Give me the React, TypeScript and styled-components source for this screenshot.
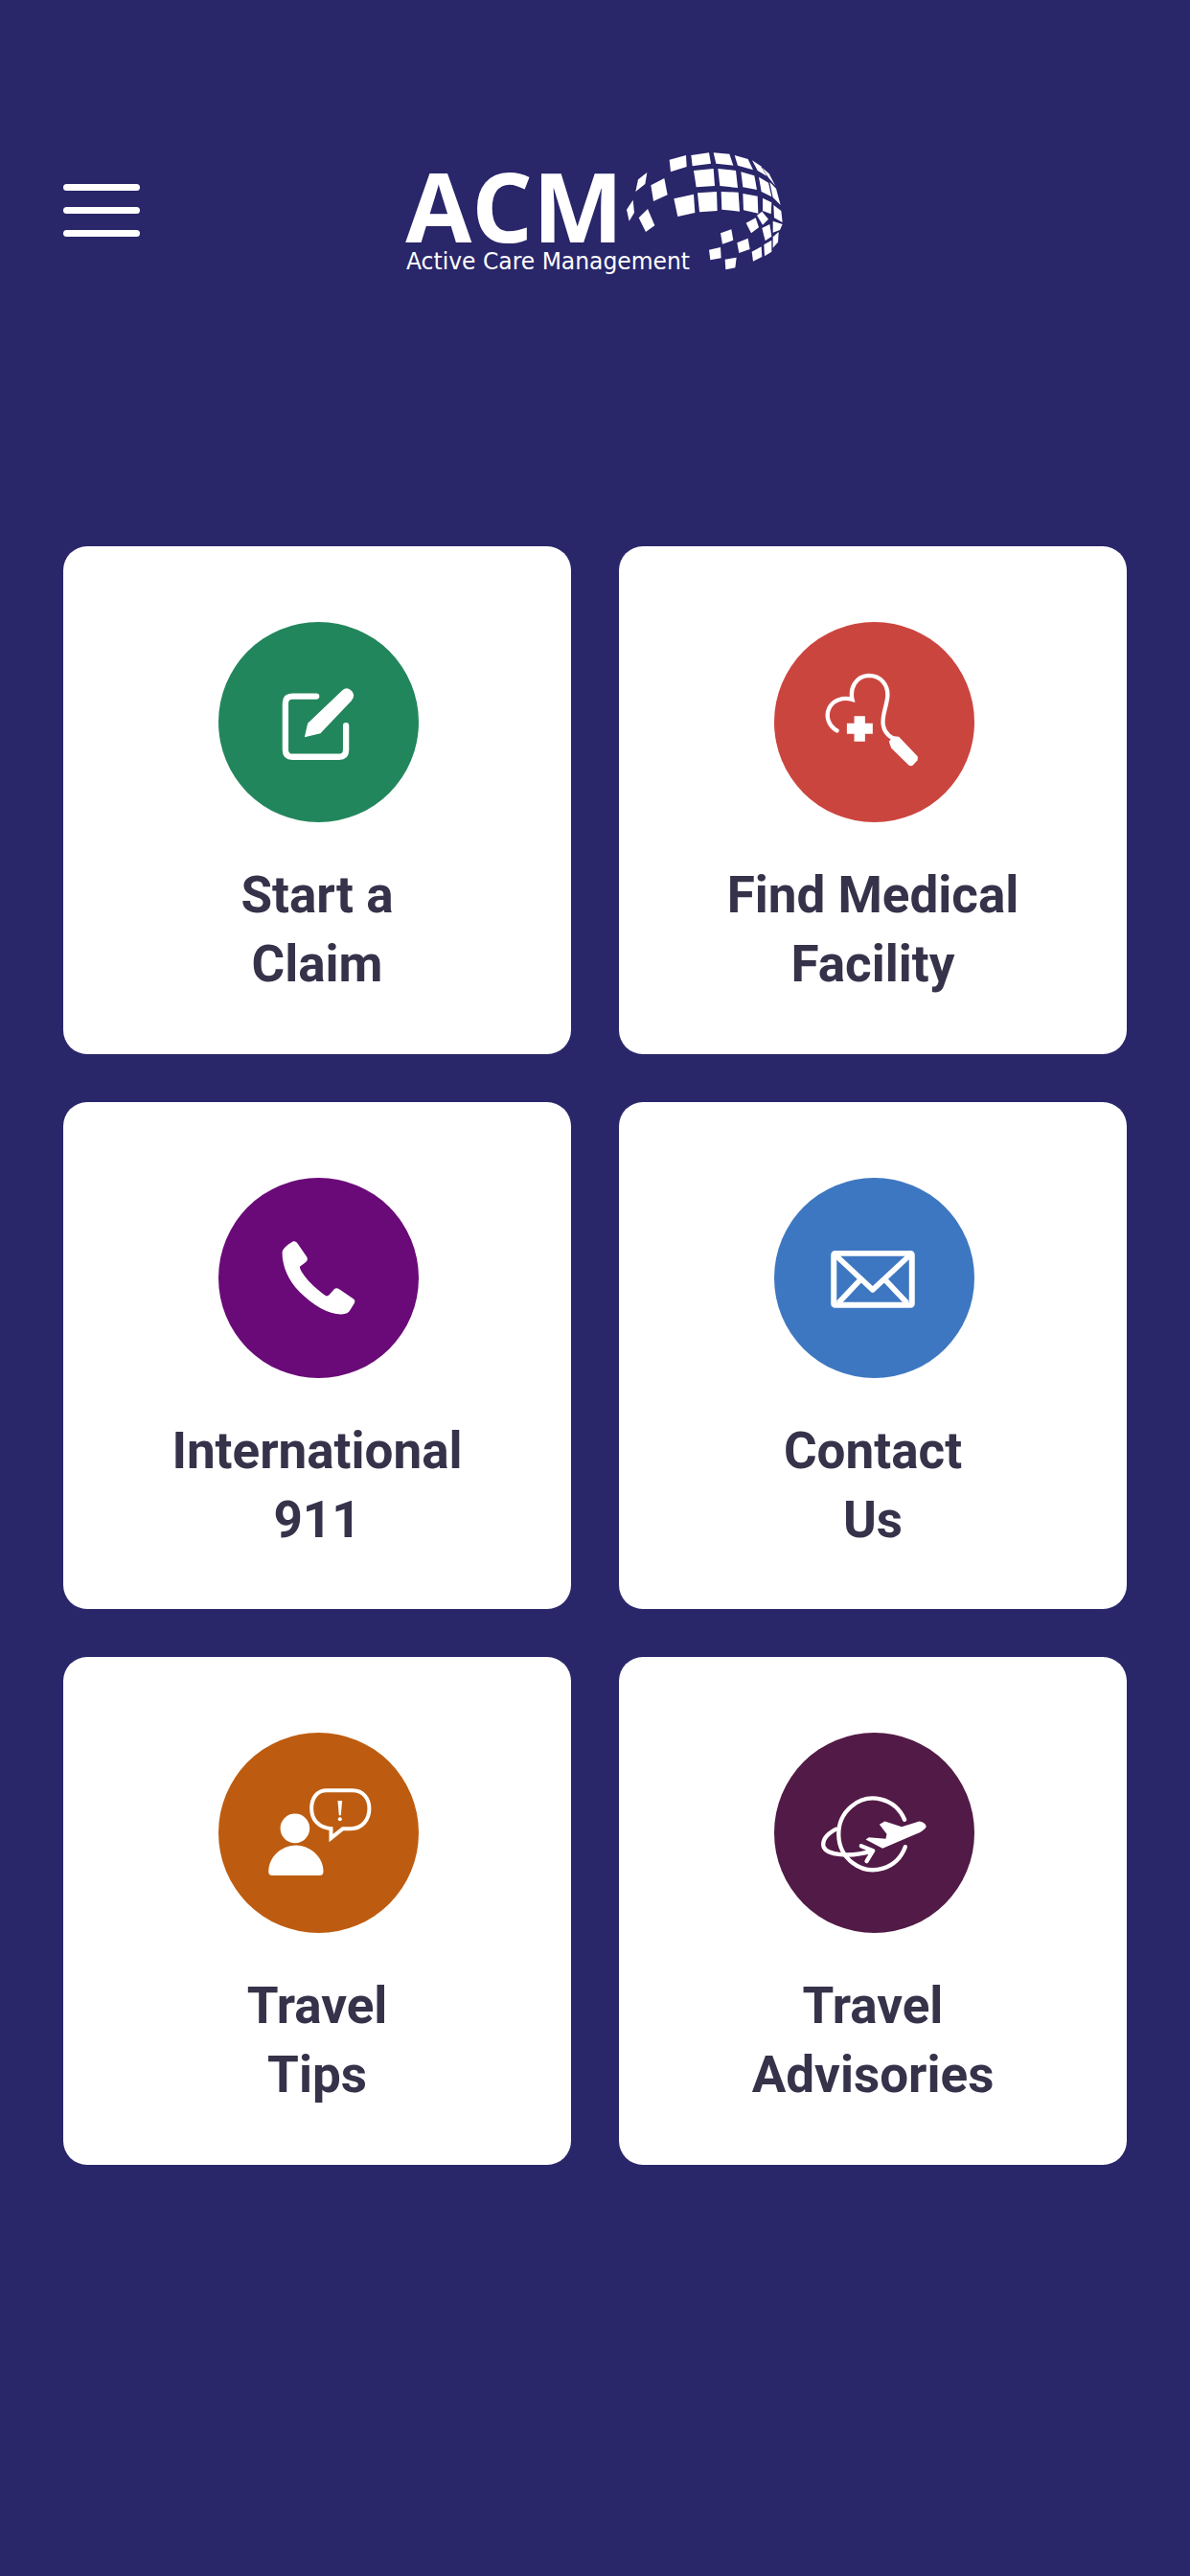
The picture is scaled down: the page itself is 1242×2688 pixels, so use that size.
import React from "react";
import styled, { createGlobalStyle } from "styled-components";

const Global = createGlobalStyle`
  html, body { margin: 0; padding: 0; background: #29266a; }
`;

const Page = styled.main`
  width: 1242px;
  height: 2688px;
  background: #29266a;
  font-family: Roboto, "Liberation Sans", sans-serif;
  overflow: hidden;
`;

const Header = styled.header`
  display: flex;
  align-items: flex-start;
  gap: 274px;
  padding: 140px 0 0 66px;
  height: 570px;
  box-sizing: border-box;
`;

const Burger = styled.button`
  display: flex;
  flex-direction: column;
  gap: 17px;
  width: 80px;
  margin-top: 52px;
  padding: 0;
  border: 0;
  background: none;
`;

const BurgerBar = styled.span`
  display: block;
  height: 7px;
  border-radius: 4px;
  background: #fff;
`;

const LogoSvg = styled.svg`
  display: block;
  width: 420px;
  height: 160px;
  flex: none;
`;

const Grid = styled.section`
  display: grid;
  grid-template-columns: 530px 530px;
  grid-auto-rows: 529.5px;
  gap: 50px;
  padding-left: 66px;
`;

const Card = styled.a`
  display: flex;
  flex-direction: column;
  align-items: center;
  padding-top: 79px;
  box-sizing: border-box;
  border-radius: 25px;
  background: #fff;
`;

const Circle = styled.div<{ $color: string }>`
  width: 209px;
  height: 209px;
  margin-left: 3px;
  border-radius: 50%;
  background: ${(p) => p.$color};
`;

const IconSvg = styled.svg`
  display: block;
  width: 100%;
  height: 100%;
`;

const Label = styled.div`
  margin-top: 40px;
  font-size: 53px;
  line-height: 72px;
  font-weight: 700;
  color: #35324a;
  text-align: center;
`;

const LabelLine = styled.span`
  display: block;
`;

const tiles = [
  "836,80 888,66 890,102 840,118",
  "904,66 960,58 966,92 908,100",
  "974,58 1024,62 1036,98 982,92",
  "1040,66 1082,78 1098,112 1050,98",
  "1095,82 1122,100 1142,132 1112,114",
  "1126,104 1148,124 1168,162 1146,136",
  "912,114 974,108 978,162 920,166",
  "988,108 1044,114 1050,168 994,162",
  "1060,118 1102,130 1110,174 1066,166",
  "1116,134 1146,152 1156,196 1124,180",
  "1150,150 1170,170 1184,222 1160,198",
  "850,202 912,188 916,246 862,258",
  "924,184 984,180 986,240 930,244",
  "998,180 1052,182 1056,242 1000,236",
  "1066,186 1112,194 1114,248 1068,238",
  "1128,200 1156,214 1154,250 1128,240",
  "1162,222 1186,240 1190,276 1164,262",
  "1160,272 1190,282 1182,300 1160,308",
  "766,120 738,142 730,180 760,156",
  "778,160 820,138 830,190 786,210",
  "722,206 702,236 710,272 726,246",
  "768,234 740,262 762,306 790,286",
  "1076,278 1106,262 1116,292 1092,310",
  "996,310 1030,298 1036,332 1002,344",
  "1048,340 1082,326 1088,360 1054,372",
  "960,362 996,354 998,388 964,394",
  "1010,392 1046,386 1042,418 1012,424",
  "1094,368 1124,352 1126,384 1098,398",
  "1132,346 1156,332 1156,368 1134,382",
  "1126,294 1150,282 1156,320 1136,334",
  "1110,254 1126,242 1146,266 1128,284",
  "1160,322 1178,306 1176,338 1160,356",
];

const Logo = () => (
  <LogoSvg viewBox="0 0 1260 480" aria-label="ACM Active Care Management">
    <text
      x="10"
      y="340"
      textLength="681"
      lengthAdjust="spacingAndGlyphs"
      fontFamily="'Open Sans', sans-serif"
      fontWeight="700"
      fontSize="304"
      fill="#fff"
    >
      ACM
    </text>
    <text
      x="12"
      y="422"
      textLength="888"
      lengthAdjust="spacingAndGlyphs"
      fontFamily="'DejaVu Sans', sans-serif"
      fontSize="72"
      fill="#fff"
    >
      Active Care Management
    </text>
    {tiles.map((t) => (
      <polygon key={t} points={t} fill="#fff" />
    ))}
  </LogoSvg>
);

const Icon = ({ children }: { children: React.ReactNode }) => (
  <IconSvg viewBox="25 27 628 628">{children}</IconSvg>
);

const items: { color: string; lines: string[]; icon: React.ReactNode }[] = [
  {
    color: "#22865d",
    lines: ["Start a", "Claim"],
    icon: (
      <>
        <path d="M332 260H257Q235 260 235 282V428Q235 450 257 450H403Q425 450 425 428V352" fill="none" stroke="#fff" strokeWidth="19" strokeLinecap="round" />
        <path d="M295 388L305 345L413 242Q428 228 443 243Q456 258 442 274L345 376Z" fill="#fff" />
      </>
    ),
  },
  {
    color: "#cb453f",
    lines: ["Find Medical", "Facility"],
    icon: (
      <>
        <path d="M222 368C195 352 185 322 198 296C210 272 240 262 270 270C262 235 280 198 320 195C360 195 385 225 380 265C375 300 360 330 368 355C372 372 385 385 398 392" fill="none" stroke="#fff" strokeWidth="13" strokeLinecap="round" />
        <path d="M276 322H310V345H334V378H310V402H276V378H253V345H276Z" fill="#fff" />
        <path d="M385 402L400 385L416 387L474 448Q478 455 474 461L460 476Q454 481 447 476L392 422Z" fill="#fff" />
      </>
    ),
  },
  {
    color: "#6a0a78",
    lines: ["International", "911"],
    icon: (
      <path d="M225 262C225 250 240 238 258 227C264 224 270 228 274 234L302 275C306 282 304 288 298 292L280 306C280 312 285 322 295 335C310 355 335 378 360 396C366 400 370 396 374 392L388 376C392 372 398 372 404 376L448 406C454 410 454 416 450 422L438 442C434 450 425 455 410 455C370 455 320 425 280 385C245 350 225 305 225 262Z" fill="#fff" />
    ),
  },
  {
    color: "#3e77c1",
    lines: ["Contact", "Us"],
    icon: (
      <>
        <rect x="212" y="264" width="245" height="162" rx="4" fill="none" stroke="#fff" strokeWidth="18" />
        <path d="M216 268L334 378L452 268M226 420L292 350M442 420L376 350" fill="none" stroke="#fff" strokeWidth="17" strokeLinejoin="round" />
      </>
    ),
  },
  {
    color: "#bd5c10",
    lines: ["Travel", "Tips"],
    icon: (
      <>
        <circle cx="265" cy="327" r="46" fill="#fff" />
        <path d="M182 462C182 415 225 380 268 380C310 380 354 415 354 462Q354 475 342 475H194Q182 475 182 462Z" fill="#fff" />
        <path d="M365 208H445C480 208 498 235 498 265C498 300 475 328 440 328H415L378 358V328C340 325 317 300 317 265C317 230 335 208 365 208Z" fill="none" stroke="#fff" strokeWidth="12" />
        <path d="M399 240H413L409 286H403Z" fill="#fff" />
        <circle cx="406" cy="298" r="6" fill="#fff" />
      </>
    ),
  },
  {
    color: "#521a46",
    lines: ["Travel", "Advisories"],
    icon: (
      <>
        <path d="M434 300A108 112 0 1 0 436 385" fill="none" stroke="#fff" strokeWidth="13" strokeLinecap="round" />
        <path d="M218 330C190 345 175 365 180 385C190 410 260 420 335 397M298 382L335 397L315 430" fill="none" stroke="#fff" strokeWidth="13" strokeLinecap="round" strokeLinejoin="round" />
        <path d="M355 315L372 305L425 322L480 305Q500 308 502 322Q495 335 470 345L365 390L312 362L322 355L375 360L378 345Z" fill="#fff" />
      </>
    ),
  },
];

export default function App() {
  return (
    <Page>
      <Global />
      <Header>
        <Burger aria-label="Menu">
          <BurgerBar />
          <BurgerBar />
          <BurgerBar />
        </Burger>
        <Logo />
      </Header>
      <Grid>
        {items.map((it) => (
          <Card key={it.lines.join(" ")}>
            <Circle $color={it.color}>
              <Icon>{it.icon}</Icon>
            </Circle>
            <Label>
              {it.lines.map((l) => (
                <LabelLine key={l}>{l}</LabelLine>
              ))}
            </Label>
          </Card>
        ))}
      </Grid>
    </Page>
  );
}
